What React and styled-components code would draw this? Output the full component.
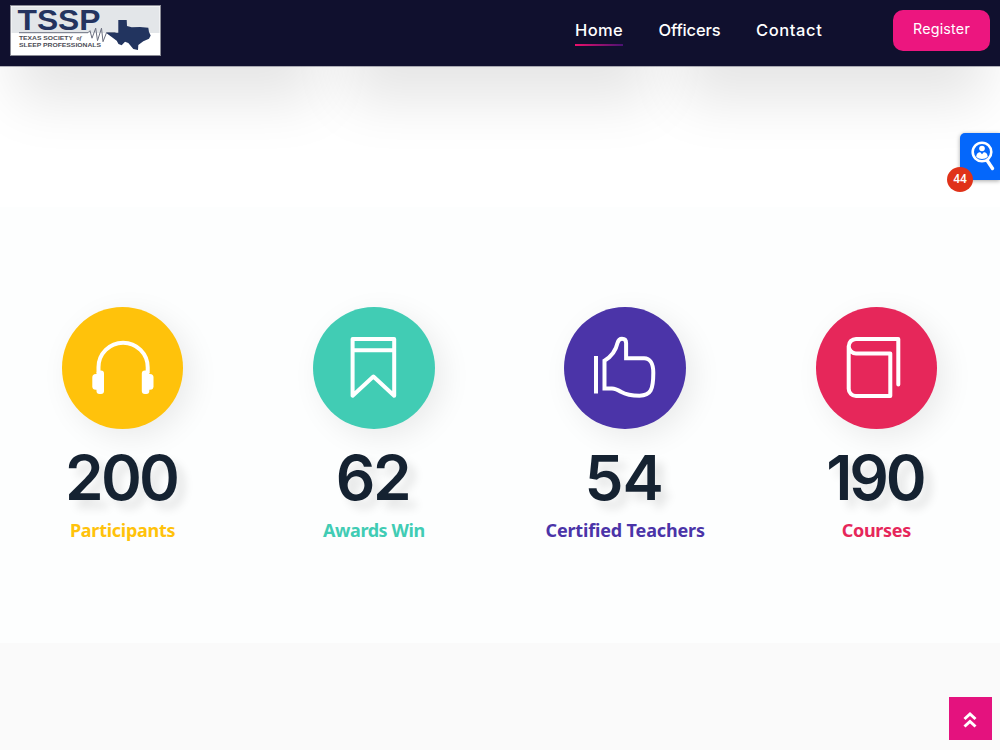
import styled, { createGlobalStyle } from "styled-components";

const GlobalStyle = createGlobalStyle`
  * {
    box-sizing: border-box;
  }

  body {
    margin: 0;
    background: #fff;
    font-family: "Inter", "Liberation Sans", sans-serif;
    overflow: hidden;
  }
`;

const Page = styled.div`
  position: relative;
  width: 1000px;
  height: 750px;
  display: flex;
  flex-direction: column;
  overflow: hidden;
`;

const Header = styled.header`
  position: relative;
  z-index: 5;
  flex: none;
  height: 66px;
  padding: 0 10px;
  display: flex;
  align-items: flex-start;
  background: #10102e;
  box-shadow: 0 1px 0 rgba(16, 16, 46, 0.3);
`;

const Logo = styled.a`
  display: flex;
  margin-top: 5px;
`;

const Nav = styled.nav`
  display: flex;
  gap: 35.5px;
  margin-left: auto;
  padding-top: 20px;
`;

const NavLink = styled.a`
  height: 26px;
  color: #fff;
  font-size: 16.5px;
  font-weight: 500;
  line-height: 20px;
  white-space: nowrap;
  width: ${({ $width }) => $width}px;
  letter-spacing: ${({ $spacing }) => $spacing || 0}px;
  background: ${({ $active }) =>
    $active
      ? "linear-gradient(90deg, #ec0f6b, #4a1272) bottom / 100% 2.5px no-repeat"
      : "none"};
`;

const RegisterButton = styled.a`
  width: 97px;
  height: 41px;
  margin: 10px 0 0 71px;
  border-radius: 10px;
  background: #ec167f;
  color: #fff;
  font-size: 14.3px;
  letter-spacing: 0.2px;
  line-height: 38px;
  text-align: center;
`;

const CardStrip = styled.section`
  flex: none;
  height: 141px;
  padding: 0 15px;
  display: flex;
  gap: 30px;
  background: #fff;
`;

const Card = styled.div`
  flex: 1;
  height: 300px;
  margin-top: -308px;
  box-shadow: 0 43px 52px rgba(0, 0, 0, 0.1);
`;

const Counters = styled.section`
  flex: none;
  height: 436px;
  margin: 0 -2px 0 -3px;
  padding-top: 100px;
  display: grid;
  grid-template-columns: repeat(4, 1fr);
  background: #fdfefe;
`;

const Counter = styled.div`
  display: flex;
  flex-direction: column;
  align-items: center;
`;

const Circle = styled.div`
  width: 121.5px;
  height: 122px;
  border-radius: 50%;
  background: ${({ $color }) => $color};
  box-shadow: 8px 8px 30px rgba(0, 0, 0, 0.08);

  svg {
    display: block;
  }
`;

const Count = styled.div`
  margin-top: 17px;
  padding-right: 3px;
  color: #152231;
  font-size: 62px;
  font-weight: 600;
  line-height: 64px;
  letter-spacing: ${({ $spacing }) => $spacing}px;
  text-shadow: 8px 8px 10px rgba(0, 0, 0, 0.1);
`;

const Label = styled.div`
  margin-top: 7px;
  color: ${({ $color }) => $color};
  font-family: "Noto Sans", "Open Sans", sans-serif;
  font-size: 18px;
  font-weight: 700;
  line-height: 26px;
  letter-spacing: ${({ $spacing }) => $spacing}px;
  white-space: nowrap;
`;

const Footer = styled.section`
  flex: 1;
  background: #fafafa;
`;

const SearchTab = styled.div`
  position: absolute;
  top: 133px;
  right: 0;
  width: 40px;
  height: 47px;
  border-radius: 5px 0 0 0;
  background: #0467fb;
  box-shadow: 0 1px 4px rgba(0, 0, 0, 0.35);
`;

const Badge = styled.span`
  position: absolute;
  top: 34px;
  left: -13px;
  width: 26px;
  height: 25px;
  border-radius: 50%;
  background: #e03219;
  color: #fff;
  font-family: "Roboto", sans-serif;
  font-size: 12px;
  font-weight: 500;
  line-height: 25px;
  text-align: center;
`;

const BackToTop = styled.button`
  position: absolute;
  right: 8px;
  bottom: 10px;
  width: 43px;
  height: 43px;
  padding: 0;
  border: 0;
  background: #e4127e;

  svg {
    display: block;
  }
`;

const LogoMark = () => (
  <svg width="151" height="51" viewBox="0 0 151 51">
    <rect width="151" height="51" fill="#8b8c96" />
    <rect x="1" y="1" width="149" height="49" fill="#fff" />
    <rect x="1.5" y="1.5" width="148" height="26.5" fill="#e3e6e9" />
    <g fontFamily="Liberation Sans, sans-serif" fontWeight="700">
      <text x="7.5" y="25.3" fontSize="29" fill="#24335f" textLength="83" lengthAdjust="spacingAndGlyphs">
        TSSP
      </text>
      <g fontSize="5.8" fill="#4b4c55">
        <text x="9" y="35.3" textLength="54" lengthAdjust="spacingAndGlyphs">
          TEXAS SOCIETY
        </text>
        <text x="66.5" y="35" fontFamily="Liberation Serif, serif" fontStyle="italic" fontSize="6">
          of
        </text>
        <text x="9" y="42" textLength="82" lengthAdjust="spacingAndGlyphs">
          SLEEP PROFESSIONALS
        </text>
      </g>
    </g>
    <path
      d="M9 27.700H78l2-2 2 7.500 3.700-10 1.800 12.500 4-12.500 1.500 13.500 3.500-9h9"
      fill="none"
      stroke="#6c7080"
      strokeWidth="1"
    />
    <path
      d="M108.300 15H116.700L117 21L121.700 22.300L130 22L138.300 22.700L139 27L140.700 30.500L139 33.700L133.300 36.300L128.300 40L128 45L123.300 44L120 40L118.300 38L115 36.700L111.700 40.300L108.500 39L106.700 35.700L101 31.500L96 27.700H108.300z"
      fill="#22345f"
    />
  </svg>
);

const LineIcon = ({ children }) => (
  <svg
    width="122"
    height="122"
    viewBox="0 0 122 122"
    fill="none"
    stroke="#fff"
    strokeWidth="4"
    strokeLinejoin="round"
  >
    {children}
  </svg>
);

const HeadphonesIcon = () => (
  <LineIcon>
    <path d="M36.500 66V60.300a24.600 24.600 0 0 1 49.200 0V66" />
    <g fill="#fff" stroke="none">
      <rect x="34.500" y="63.500" width="7.500" height="23.500" rx="3" />
      <rect x="30.300" y="67" width="9" height="15.800" rx="3.500" />
      <rect x="79.800" y="63.500" width="7.500" height="23.500" rx="3" />
      <rect x="82.500" y="67" width="9" height="15.800" rx="3.500" />
    </g>
  </LineIcon>
);

const BookmarkIcon = () => (
  <LineIcon>
    <path d="M39.600 32h41.600v56.700L60.400 69.500 39.600 88.700zM39.600 43.300h41.600" />
  </LineIcon>
);

const ThumbIcon = () => (
  <LineIcon>
    <path d="M32 49v37.500" />
    <path
      strokeLinejoin="miter"
      d="M40.500 53.700C47.500 49.500 51.500 45 53.500 36c.8-3 2.300-4.200 4.500-4.200 2.700 0 4.100 1.500 4.100 4.200v15.300h18c6 0 9.200 5.500 9.200 14.400 0 17-2.500 23-13.800 23-7.500 0-13-.8-18.600-4-3.500-2.200-5.800-3.300-8.900-3.300h-7.500z"
    />
  </LineIcon>
);

const BookIcon = () => (
  <LineIcon>
    <path
      strokeLinecap="round"
      d="M82.300 77.500V31.900H40a7.250 7.250 0 0 0 0 14.500h34.300V89H40a7.300 7.300 0 0 1-7.300-7.300V39"
    />
  </LineIcon>
);

const counters = [
  { count: "200", label: "Participants", color: "#ffc20b", Icon: HeadphonesIcon, spacing: -2.8, labelSpacing: -0.27 },
  { count: "62", label: "Awards Win", color: "#41ccb4", Icon: BookmarkIcon, spacing: -2.5, labelSpacing: -0.42 },
  { count: "54", label: "Certified Teachers", color: "#4b34a8", Icon: ThumbIcon, spacing: -1, labelSpacing: -0.16 },
  { count: "190", label: "Courses", color: "#e6275a", Icon: BookIcon, spacing: -3.2, labelSpacing: -0.3 },
];

const App = () => (
  <>
    <GlobalStyle />
    <Page>
      <Header>
        <Logo>
          <LogoMark />
        </Logo>
        <Nav>
          <NavLink $active $width={48} $spacing={0.4}>Home</NavLink>
          <NavLink $width={62} $spacing={-0.15}>Officers</NavLink>
          <NavLink $width={66} $spacing={0.6}>Contact</NavLink>
        </Nav>
        <RegisterButton>Register</RegisterButton>
      </Header>
      <CardStrip>
        <Card />
        <Card />
        <Card />
      </CardStrip>
      <Counters>
        {counters.map(({ count, label, color, Icon, spacing, labelSpacing }) => (
          <Counter key={label}>
            <Circle $color={color}>
              <Icon />
            </Circle>
            <Count $spacing={spacing}>{count}</Count>
            <Label $color={color} $spacing={labelSpacing}>
              {label}
            </Label>
          </Counter>
        ))}
      </Counters>
      <Footer />
      <SearchTab>
        <svg width="40" height="47" viewBox="0 0 40 47" fill="none" stroke="#fff">
          <circle cx="22" cy="19" r="9.300" strokeWidth="2.600" />
          <path d="M27.500 28l5 7.500" strokeWidth="3.400" strokeLinecap="round" />
          <circle cx="22" cy="15.500" r="2.800" fill="#fff" stroke="none" />
          <path d="M16.300 24c0-3.500 2-4.700 4-4.700l1.700 2 1.700-2c2 0 4 1.200 4 4.700-3 2.500-8.500 2.500-11.400 0z" fill="#fff" stroke="none" />
        </svg>
        <Badge>44</Badge>
      </SearchTab>
      <BackToTop aria-label="Back to top">
        <svg width="43" height="43" viewBox="0 0 43 43" fill="none" stroke="#fff" strokeWidth="3">
          <path d="M15.500 22l5.500-5 5.500 5M15.500 29.500l5.500-5 5.500 5" />
        </svg>
      </BackToTop>
    </Page>
  </>
);

export default App;
